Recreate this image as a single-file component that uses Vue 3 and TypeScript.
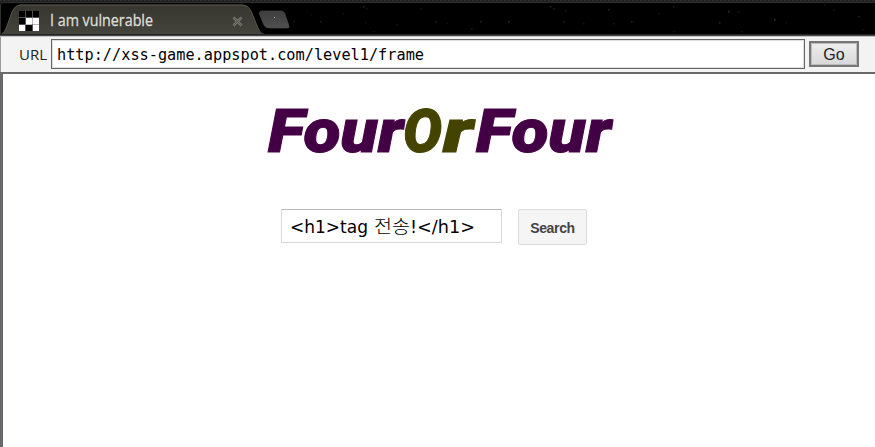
<script setup lang="ts">
import { ref } from 'vue'

const title = 'I am vulnerable'
const url = ref('http://xss-game.appspot.com/level1/frame')

interface LogoPart { text: string; x: number; width: number; color: string }
const logo: LogoPart[] = [
  { text: 'Four', x: 8, width: 135, color: '#440044' },
  { text: 'O', x: 143, width: 39, color: '#444400' },
  { text: 'r', x: 183, width: 30, color: '#444400' },
  { text: 'Four', x: 216, width: 135, color: '#440044' },
]

interface Speck { x: number; y: number; o: number }
const specks: Speck[] = [
  [293, 21, .25], [320, 21, .3], [363, 6, .35], [366, 8, .2], [365, 22, .15], [373, 31, .15],
  [343, 13, .12], [311, 14, .12], [396, 24, .15], [420, 8, .15], [435, 21, .25], [447, 23, .15],
  [471, 28, .25], [480, 21, .35], [508, 21, .4], [550, 6, .35], [553, 8, .25], [565, 10, .2],
  [563, 21, .25], [583, 23, .2], [608, 9, .35], [613, 23, .2], [631, 21, .3], [658, 13, .2],
  [673, 6, .25], [673, 31, .2], [719, 22, .35], [728, 11, .4], [738, 11, .25], [741, 31, .2],
  [774, 19, .45], [785, 22, .15], [833, 9, .2], [858, 16, .3], [863, 29, .15], [824, 4, .2],
].map(([x, y, o]) => ({ x, y, o }))
</script>

<template>
  <div class="browser">
    <header class="tabs">
      <svg width="875" height="37" viewBox="0 0 875 37">
        <defs>
          <linearGradient id="tabFill" x1="0" y1="0" x2="0" y2="1">
            <stop offset="0" stop-color="#36362f" />
            <stop offset="1" stop-color="#45453d" />
          </linearGradient>
          <linearGradient id="newFill" x1="0" y1="0" x2="0" y2="1">
            <stop offset="0" stop-color="#3d3d3d" />
            <stop offset="1" stop-color="#505050" />
          </linearGradient>
        </defs>
        <rect width="875" height="37" fill="#000" />
        <rect width="875" height="3" fill="#202020" />
        <path d="M0 .5H875" stroke="#303030" stroke-dasharray="2 2" />
        <path d="M0.5 35V5Q0.5 2.5 4 2.5H875" fill="none" stroke="#303030" />
        <rect v-for="(s, i) in specks" :key="i" :x="s.x" :y="s.y" width="1.5" height="1.5" fill="#fff" :opacity="s.o * .45" />
        <path d="M1 35Q5 33 7 26L12 12Q15 4.500 21 4.500H242Q248 4.500 251 11L258 28Q260 34 264 35Z" fill="url(#tabFill)" />
        <path d="M2 34Q5 32 7 26L12 12Q15 5 21 5H242Q248 5 251 11L258 28Q260 34 264 34.500" fill="none" stroke="#57574e" stroke-width="1" />
        <path d="M263 11H281Q284 11 285 14L289 26Q289.500 28 287 28H269Q265 28 263.500 24L259.500 14Q258.500 11 263 11Z" fill="url(#newFill)" stroke="#484848" stroke-width=".7" />
        <path d="M274 17.500h1" stroke="#aaa" />
        <path d="M0 34.500H875" stroke="#252525" />
        <path d="M0 35.500H875" stroke="#444" />
        <path d="M0 36.500H875" stroke="#c4c4c4" />
        <g>
          <rect x="19" y="11" width="20" height="20" fill="#000" />
          <path d="M26 18h13v6h-13zM19 25h6v6h-6zM33 24h6v7h-6z" fill="#fff" />
          <path d="M26 24h6v1h-6z" fill="#fff" />
          <path d="M25.500 11V31M32.500 11V31M19 17.500H39M19 24.500H39" stroke="#888" stroke-width=".6" />
        </g>
        <text class="tab-title" x="50" y="25.500" textLength="103" lengthAdjust="spacingAndGlyphs">{{ title }}</text>
        <path d="M233.500 17.500l8 8M241.500 17.500l-8 8" stroke="#77776f" stroke-width="2.600" />
        <path d="M234 18l7 7M241 18l-7 7" stroke="#4b4b44" stroke-width=".8" />
      </svg>
    </header>
    <div class="toolbar">
      <svg class="url-label" width="32" height="30"><text x="0" y="21" textLength="28" lengthAdjust="spacingAndGlyphs">URL</text></svg>
      <div class="url-field">
        <svg width="400" height="26"><text x="4" y="19" textLength="367" lengthAdjust="spacingAndGlyphs">{{ url }}</text></svg>
      </div>
      <button class="go">Go</button>
    </div>
    <main class="frame">
      <svg class="logo" width="380" height="82">
        <text v-for="(p, i) in logo" :key="i" :x="p.x" y="62" :textLength="p.width" lengthAdjust="spacingAndGlyphs" :fill="p.color" :stroke="p.color">{{ p.text }}</text>
      </svg>
      <div class="search">
        <div class="query">
          <svg width="218" height="31">
            <text x="8" y="23" textLength="78" lengthAdjust="spacingAndGlyphs">&lt;h1&gt;tag</text>
            <text class="korean" x="92" y="23" textLength="36" lengthAdjust="spacingAndGlyphs">전송</text>
            <text x="128" y="23" textLength="65" lengthAdjust="spacingAndGlyphs">!&lt;/h1&gt;</text>
          </svg>
        </div>
        <button class="submit">Search</button>
      </div>
    </main>
  </div>
</template>

<style>
body { margin: 0; overflow: hidden; background: #fff; }
</style>

<style scoped>
.browser { width: 875px; height: 447px; display: flex; flex-direction: column; overflow: hidden; }
svg { display: block; }
button { margin: 0; padding: 0; box-sizing: border-box; }
.tabs { height: 37px; flex: none; }
.tab-title { font: 15.5px "Open Sans", sans-serif; fill: #deded8; stroke: #deded8; stroke-width: .3px; }
.toolbar { height: 35px; flex: none; box-sizing: border-box; display: flex; align-items: flex-start; padding: 2px 0 0 18px; background: #f3f3f3; border-left: 1px solid #999; }
.url-label { flex: none; font: 15px "Open Sans", sans-serif; fill: #222; }
.url-field { width: 754px; height: 30px; box-sizing: border-box; border: 1px solid #666; box-shadow: inset 0 0 0 1px #ddd; background: #fff; padding: 1px; flex: none; font: 15px "DejaVu Sans Mono", monospace; }
.go { width: 50px; height: 26px; margin: 2px 0 0 4px; padding-top: 1px; border: 2px solid #777; box-shadow: inset 0 0 0 1px #bbb; background: linear-gradient(#eee, #d8d8d8); font: 16px "Liberation Sans", sans-serif; color: #222; }
.frame { flex: 1; border-left: 3px solid #69696b; border-top: 2px solid #69696b; background: #fff; padding: 16px 0 0 257px; }
.logo { font: italic 900 61px Roboto, sans-serif; stroke-width: 1px; }
.search { display: flex; margin: 37px 0 0 21px; gap: 16px; }
.query { width: 221px; height: 34px; box-sizing: border-box; border: 1px solid #d9d9d9; border-top-color: #b8b8b8; border-radius: 1px; font: 18px "DejaVu Sans", sans-serif; }
.korean { font-family: "Noto Sans CJK KR", sans-serif; font-weight: 300; }
.submit { width: 69px; height: 36px; border: 1px solid #dcdcdc; border-radius: 2px; background: #f5f5f5; color: #444; font: bold 14px "Liberation Sans", sans-serif; letter-spacing: -.35px; padding-top: 2px; }
</style>
